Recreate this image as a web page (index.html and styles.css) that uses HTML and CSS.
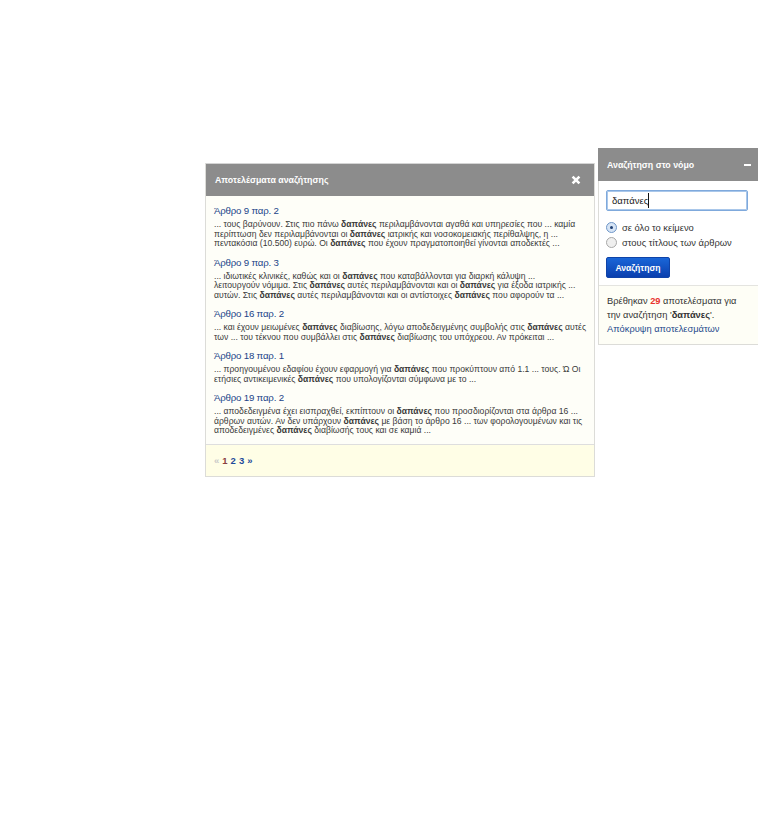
FILE: index.html
```html
<!DOCTYPE html>
<html lang="el">
<head>
<meta charset="utf-8">
<title>Αναζήτηση</title>
<link rel="stylesheet" href="styles.css">
</head>
<body>
<section class="panel results">
  <header class="panel-head results-head">
    <span>Αποτελέσματα αναζήτησης</span>
    <svg class="close" width="10" height="10" viewBox="0 0 10 10"><path d="M1.6 1.6 8.4 8.4M8.4 1.6 1.6 8.4" stroke="#fff" stroke-width="2.6" fill="none"/></svg>
  </header>
  <div class="results-body">
    <article class="hit">
      <a class="hit-title" href="#">Άρθρο 9 παρ. 2</a>
      <p>... τους βαρύνουν. Στις πιο πάνω <b>δαπάνες</b> περιλαμβάνονται αγαθά και υπηρεσίες που ... καμία<br>περίπτωση δεν περιλαμβάνονται οι <b>δαπάνες</b> ιατρικής και νοσοκομειακής περίθαλψης, η ...<br>πεντακόσια (10.500) ευρώ. Οι <b>δαπάνες</b> που έχουν πραγματοποιηθεί γίνονται αποδεκτές ...</p>
    </article>
    <article class="hit">
      <a class="hit-title" href="#">Άρθρο 9 παρ. 3</a>
      <p>... ιδιωτικές κλινικές, καθώς και οι <b>δαπάνες</b> που καταβάλλονται για διαρκή κάλυψη ...<br>λειτουργούν νόμιμα. Στις <b>δαπάνες</b> αυτές περιλαμβάνονται και οι <b>δαπάνες</b> για έξοδα ιατρικής ...<br>αυτών. Στις <b>δαπάνες</b> αυτές περιλαμβάνονται και οι αντίστοιχες <b>δαπάνες</b> που αφορούν τα ...</p>
    </article>
    <article class="hit">
      <a class="hit-title" href="#">Άρθρο 16 παρ. 2</a>
      <p>... και έχουν μειωμένες <b>δαπάνες</b> διαβίωσης, λόγω αποδεδειγμένης συμβολής στις <b>δαπάνες</b> αυτές<br>των ... του τέκνου που συμβάλλει στις <b>δαπάνες</b> διαβίωσης του υπόχρεου. Αν πρόκειται ...</p>
    </article>
    <article class="hit">
      <a class="hit-title" href="#">Άρθρο 18 παρ. 1</a>
      <p>... προηγουμένου εδαφίου έχουν εφαρμογή για <b>δαπάνες</b> που προκύπτουν από 1.1 ... τους. Ώ Οι<br>ετήσιες αντικειμενικές <b>δαπάνες</b> που υπολογίζονται σύμφωνα με το ...</p>
    </article>
    <article class="hit">
      <a class="hit-title" href="#">Άρθρο 19 παρ. 2</a>
      <p>... αποδεδειγμένα έχει εισπραχθεί, εκπίπτουν οι <b>δαπάνες</b> που προσδιορίζονται στα άρθρα 16 ...<br>άρθρων αυτών. Αν δεν υπάρχουν <b>δαπάνες</b> με βάση το άρθρο 16 ... των φορολογουμένων και τις<br>αποδεδειγμένες <b>δαπάνες</b> διαβίωσής τους και σε καμιά ...</p>
    </article>
  </div>
  <footer class="pager">
    <span class="off">«</span>
    <span class="cur">1</span>
    <a href="#">2</a>
    <a href="#">3</a>
    <a href="#">»</a>
  </footer>
</section>

<aside class="panel search">
  <header class="panel-head search-head">
    <span>Αναζήτηση στο νόμο</span>
    <i class="minus"></i>
  </header>
  <div class="search-form">
    <div class="field"><span>δαπάνες</span><i class="caret"></i></div>
    <div class="choices">
      <div class="choice"><i class="radio on"></i><span>σε όλο το κείμενο</span></div>
      <div class="choice"><i class="radio"></i><span>στους τίτλους των άρθρων</span></div>
    </div>
    <button class="go" type="button">Αναζήτηση</button>
  </div>
  <div class="summary">
    Βρέθηκαν <b class="count">29</b> αποτελέσματα για<br>την αναζήτηση '<b>δαπάνες</b>'.<br><a href="#">Απόκρυψη αποτελεσμάτων</a>
  </div>
</aside>
</body>
</html>
```

FILE: styles.css
```css
html, body { margin: 0; padding: 0; background: #fff; }
body { width: 758px; height: 813px; overflow: hidden; position: relative; font-family: "Liberation Sans", Arial, sans-serif; color: #333; }
a { color: #1f4a8c; text-decoration: none; }
.panel { position: absolute; box-sizing: border-box; border: 1px solid #dcdcd8; border-top: 0; }
.panel-head { display: flex; align-items: center; justify-content: space-between; background: #8c8c8c; color: #fff; font-weight: bold; font-size: 8.8px; box-sizing: border-box; }

.results { left: 205px; top: 163px; width: 390px; height: 314px; background: #fefef8; }
.results-head { height: 33px; padding: 0 13px 0 9px; border-top: 1px solid #d4d4d4; }
.close { display: block; margin-top: -1px; }
.results-body { height: 249px; box-sizing: border-box; padding: 9px 8px 0; border-bottom: 1px solid #dedede; }
.hit { margin-bottom: 8px; }
.hit-title { display: block; font-size: 9.7px; letter-spacing: -0.2px; line-height: 12px; margin-bottom: 3px; color: #1a4488; }
.hit p { margin: 0; font-size: 8.6px; line-height: 9.5px; white-space: nowrap; color: #3a3a3a; }
.pager { height: 31px; box-sizing: border-box; background: #fffee6; padding: 0 8px; display: flex; align-items: center; gap: 3px; font-size: 9.5px; font-weight: bold; }
.off { color: #c9c9c9; }
.cur { color: #8a4040; }
.pager a { color: #1d4a9a; }

.search { left: 598px; top: 148px; width: 160px; height: 197px; background: #fff; border-right: 0; }
.search-head { height: 33px; padding: 0 7px 0 9px; margin-left: -1px; }
.minus { display: block; width: 7px; height: 2px; background: #fff; }
.search-form { padding: 9px 7px 0; height: 105px; box-sizing: border-box; border-bottom: 1px solid #e4e4e0; }
.field { width: 142px; height: 21px; box-sizing: border-box; border: 1px solid #7fa9dc; box-shadow: inset 0 0 0 1px #a9c7ea; border-radius: 2px; background: #fff; display: flex; align-items: center; padding-left: 5px; font-size: 9.5px; color: #222; }
.caret { display: block; width: 1px; height: 15px; background: #111; }
.choices { margin-top: 10px; display: flex; flex-direction: column; gap: 3px; }
.choice { display: flex; align-items: center; gap: 5px; height: 12px; font-size: 9.4px; color: #333; }
.radio { display: block; width: 11px; height: 11px; box-sizing: border-box; border: 1px solid #a8a8a8; border-radius: 50%; background: #efefef; position: relative; }
.radio.on { border-color: #6f96c8; background: #d6e4f5; }
.radio.on::after { content: ""; position: absolute; left: 3px; top: 3px; width: 3px; height: 3px; border-radius: 50%; background: #1f3f73; }
.go { display: block; margin-top: 9px; width: 64px; height: 21px; padding: 0; border: 1px solid #0f43a8; border-radius: 2px; background: linear-gradient(#1a66d8, #0a3fae); color: #fff; font: bold 8.6px "Liberation Sans", Arial, sans-serif; }

.summary { height: 58px; box-sizing: border-box; background: #fefef6; padding: 8px 8px 0; font-size: 9.3px; line-height: 14px; color: #333; white-space: nowrap; }
.count { color: #e8322e; }
.summary a { color: #1f4a8c; }
```
